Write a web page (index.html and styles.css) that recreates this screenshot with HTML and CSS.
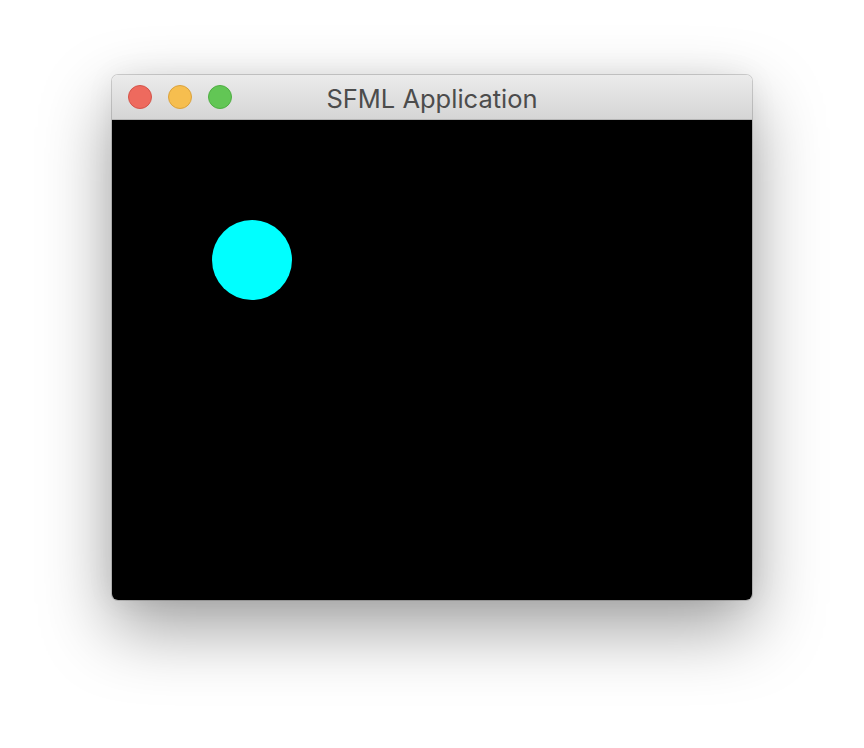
FILE: index.html
```html
<!DOCTYPE html>
<html>
<head>
<meta charset="utf-8">
<link rel="stylesheet" href="styles.css">
<title>SFML Application</title>
</head>
<body>
<div class="window">
  <div class="titlebar">
    <div class="lights">
      <span class="light red"></span>
      <span class="light yellow"></span>
      <span class="light green"></span>
    </div>
    <div class="title">SFML Application</div>
  </div>
  <div class="canvas">
    <div class="ball"></div>
  </div>
</div>
</body>
</html>
```
FILE: styles.css
```css
html, body {
  margin: 0;
  padding: 0;
  background: #ffffff;
}
body {
  width: 864px;
  height: 748px;
  display: flex;
  justify-content: center;
  align-items: flex-start;
  padding-top: 75px;
  box-sizing: border-box;
  font-family: "Inter", "Liberation Sans", sans-serif;
}
.window {
  width: 640px;
  border-radius: 6px;
  overflow: hidden;
  box-shadow: 0 0 0 1px rgba(0,0,0,0.16), 0 28px 70px rgba(0,0,0,0.38), 0 0 30px rgba(0,0,0,0.06);
  display: flex;
  flex-direction: column;
}
.titlebar {
  height: 44px;
  background: linear-gradient(#ebebeb, #d5d5d5);
  border-bottom: 1px solid #b6b6b6;
  position: relative;
  display: flex;
  align-items: center;
  justify-content: center;
}
.lights {
  position: absolute;
  left: 16px;
  top: 10px;
  display: flex;
  gap: 16px;
}
.light {
  width: 22px;
  height: 22px;
  border-radius: 50%;
  display: block;
}
.red { background: #ee6a5e; border: 1px solid #d4544a; }
.yellow { background: #f6be4f; border: 1px solid #dba23c; }
.green { background: #62c655; border: 1px solid #4fae43; }
.title {
  font-size: 25.5px;
  color: #4c4c4c;
  margin-top: 2px;
}
.canvas {
  height: 480px;
  background: #000000;
  position: relative;
}
.ball {
  position: absolute;
  left: 100px;
  top: 100px;
  width: 80px;
  height: 80px;
  border-radius: 50%;
  background: #00ffff;
}
```
